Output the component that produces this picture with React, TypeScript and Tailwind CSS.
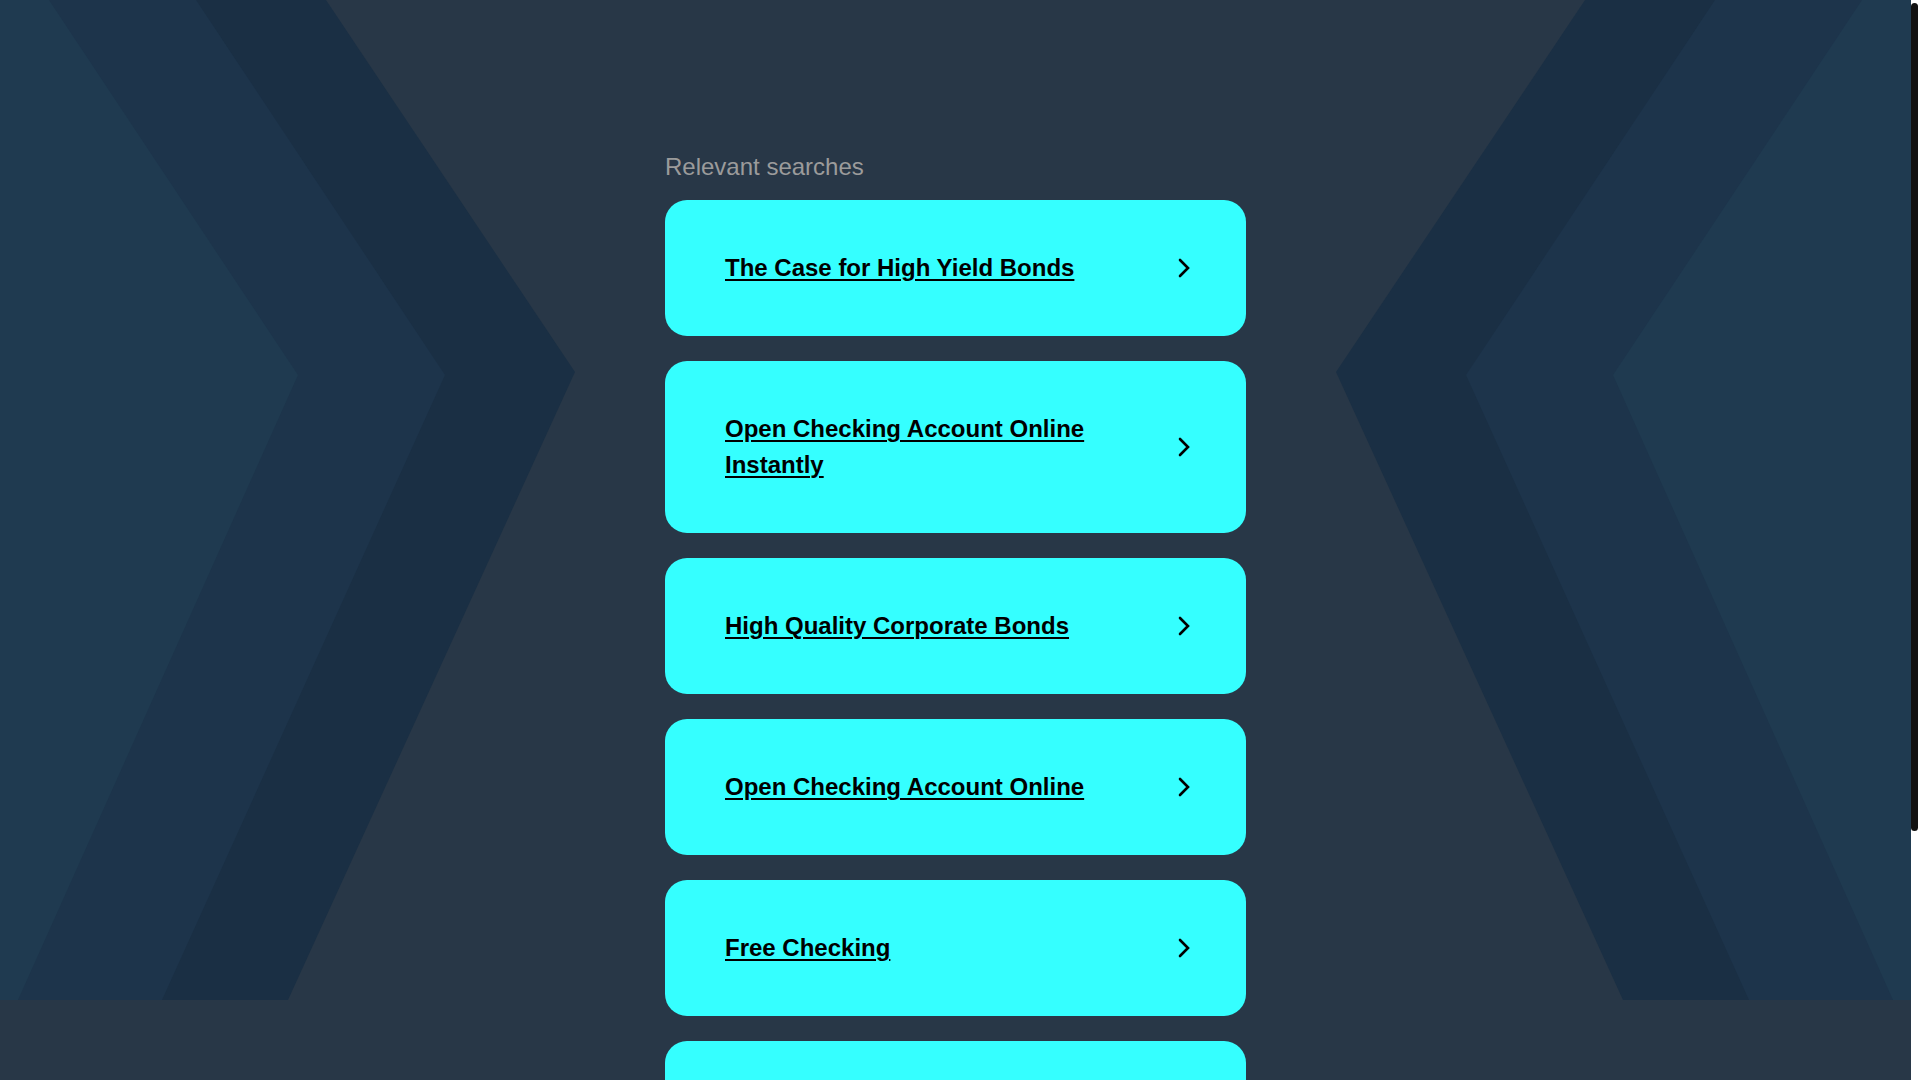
const searches = [
  "The Case for High Yield Bonds",
  "Open Checking Account Online Instantly",
  "High Quality Corporate Bonds",
  "Open Checking Account Online",
  "Free Checking",
  "Best Savings Account Rates",
];

// mirrored chevron bands behind the list
function Backdrop() {
  const bands = [
    { fill: "#1a2f44", top: 326, tip: 575, tipY: 372, bottom: 288 },
    { fill: "#1d344b", top: 196, tip: 445, tipY: 375, bottom: 162 },
    { fill: "#1f3a50", top: 49, tip: 298, tipY: 375, bottom: 18 },
  ];
  const W = 1911;
  return (
    <svg
      className="absolute left-0 top-0 w-full h-[1000px]"
      viewBox={`0 0 ${W} 1000`}
      preserveAspectRatio="none"
    >
      {bands.map((b) => (
        <g key={b.fill} fill={b.fill}>
          <polygon points={`0,0 ${b.top},0 ${b.tip},${b.tipY} ${b.bottom},1000 0,1000`} />
          <polygon
            points={`${W},0 ${W - b.top},0 ${W - b.tip},${b.tipY} ${W - b.bottom},1000 ${W},1000`}
          />
        </g>
      ))}
    </svg>
  );
}

function Chevron() {
  return (
    <svg width="12" height="20" viewBox="0 0 12 20" className="shrink-0 ml-[40px]">
      <path
        d="M2 2 L10 10 L2 18"
        fill="none"
        stroke="#000"
        strokeWidth="2.6"
        strokeLinecap="round"
        strokeLinejoin="miter"
      />
    </svg>
  );
}

export default function App() {
  return (
    <div className="flex h-screen overflow-hidden bg-[#283747] font-['Liberation_Sans',Arial,sans-serif]">
      <main className="relative flex-1 min-w-0">
        <Backdrop />

        <div className="relative w-[581px] mx-auto pt-[149px] pb-[70px]">
          <h2 className="text-[24px] leading-[36px] text-[#9b9b9b] mb-[15px]">
            Relevant searches
          </h2>

          <div className="flex flex-col gap-[25px]">
            {searches.map((s) => (
              <a
                key={s}
                href="#"
                className="flex items-center rounded-[22px] bg-[#35ffff] pl-[60px] pr-[56px] py-[50px] text-black"
              >
                <span className="flex-1 text-[24px] leading-[36px] font-bold underline underline-offset-[3px] decoration-[2px]">
                  {s}
                </span>
                <Chevron />
              </a>
            ))}
          </div>
        </div>
      </main>

      {/* scrollbar strip */}
      <aside className="w-[9px] shrink-0 bg-white">
        <div className="mt-[3px] h-[828px] w-[7px] rounded-full bg-[#111111]" />
      </aside>
    </div>
  );
}
